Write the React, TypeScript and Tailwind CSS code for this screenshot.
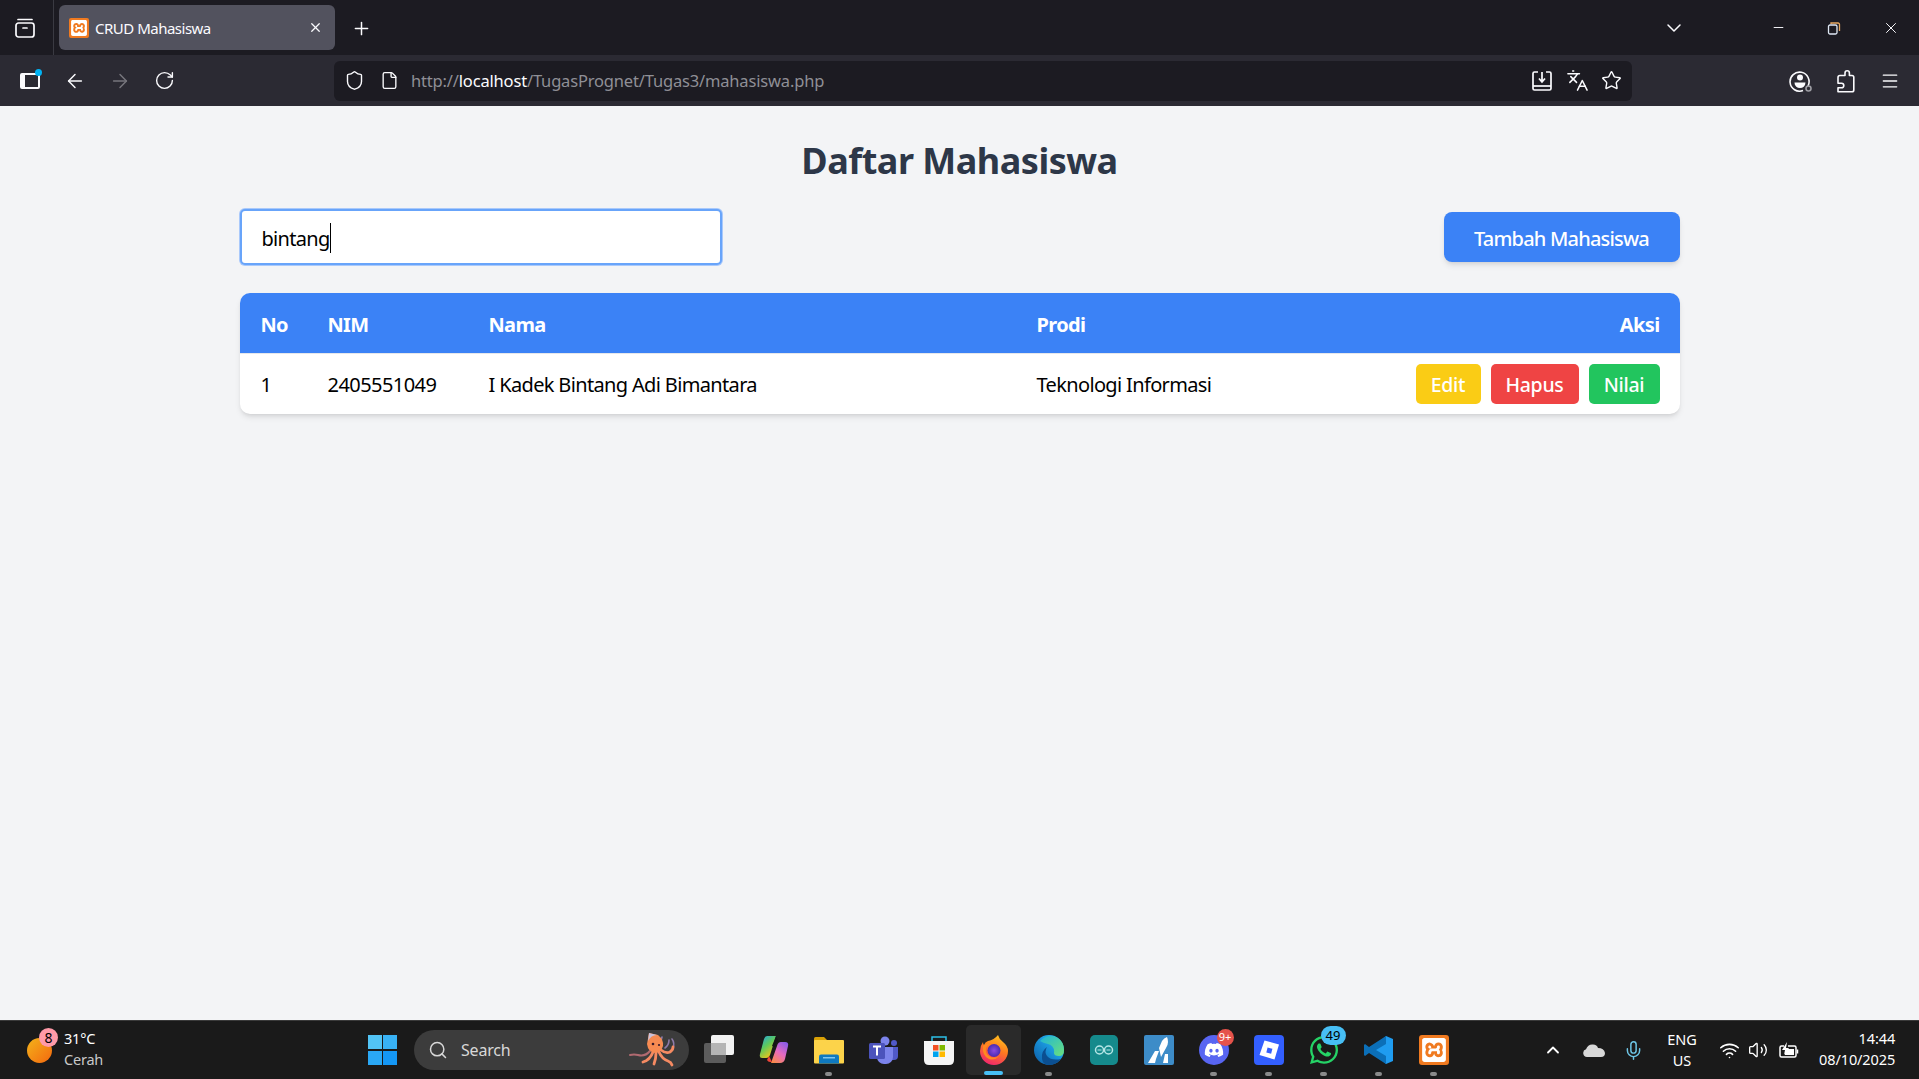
import React from 'react';
import {
  ArrowLeft, ArrowRight, RotateCw, Shield, File, Star, Menu, X, Plus, ChevronDown, ChevronUp,
  Minus, Languages, Search, Mic, Wifi, Volume2,
} from 'lucide-react';
import { FaDiscord, FaWhatsapp } from 'react-icons/fa';
import { SiXampp } from 'react-icons/si';

const uiFont = { fontFamily: '"Noto Sans", "Open Sans", sans-serif' };

const BrowserTabBar = () => (
  <div className="flex h-[55px] items-center bg-[#1c1b22] text-[#fbfbfe]">
    <div className="flex h-full w-[54px] items-center justify-center border-r border-[#3a3a42] pr-[3px]">
      <svg width="22" height="22" viewBox="0 0 22 22" fill="none" stroke="currentColor" strokeWidth="1.7">
        <rect x="2" y="6" width="18" height="14" rx="2.5" />
        <path d="M4 2.5h14" strokeLinecap="round" />
        <path d="M9 11h4" strokeLinecap="round" />
      </svg>
    </div>
    <div className="ml-[5px] flex h-[45px] w-[276px] items-center rounded-[6px] bg-[#52525e] pl-[10px] pr-[12px]">
      <div className="flex h-[20px] w-[20px] items-center justify-center rounded-[2px] bg-[#f07a20]">
        <SiXampp size={16} color="#fff" />
      </div>
      <span className="ml-[6px] flex-1 pt-[1px] text-[15px] tracking-[-0.5px]">CRUD Mahasiswa</span>
      <X size={15} strokeWidth={2} />
    </div>
    <Plus size={21} strokeWidth={1.7} className="ml-[16px] mt-[1px]" />
    <div className="flex-1" />
    <ChevronDown size={24} strokeWidth={1.5} className="mr-[85px]" />
    <Minus size={15} strokeWidth={1.5} className="mr-[41px]" />
    <svg width="14" height="14" viewBox="0 0 14 14" fill="none" strokeWidth="1.3" className="mr-[41px]">
      <path d="M4 3V2h7a1.5 1.5 0 0 1 1.5 1.5V10" stroke="#e8a860" />
      <rect x="1.5" y="4" width="8.5" height="9" rx="1.5" stroke="#dfe8f5" />
    </svg>
    <X size={18} strokeWidth={1.3} className="mr-[19px]" />
  </div>
);

const BrowserToolbar = () => (
  <div className="flex h-[51px] items-center bg-[#2b2a33] text-[#fbfbfe]">
    <div className="relative ml-[20px] flex w-[20px] justify-center">
      <div className="h-[16px] w-[20px] rounded-[2px] border-[2px] border-l-[5px] border-[#fbfbfe]" />
      <div className="absolute -right-[2px] -top-[4px] h-[7px] w-[7px] rounded-full bg-[#00b3f4]" />
    </div>
    <ArrowLeft size={22} strokeWidth={1.6} className="ml-[24px]" />
    <ArrowRight size={22} strokeWidth={1.6} className="ml-[23px] text-[#77767d]" />
    <RotateCw size={21} strokeWidth={1.6} className="ml-[23px]" />
    <div className="ml-[159px] flex h-[40px] w-[1298px] items-center rounded-[6px] bg-[#1c1b22] pl-[10px] pr-[10px]">
      <Shield size={21} strokeWidth={1.6} />
      <File size={19} strokeWidth={1.7} className="ml-[15px]" />
      <span className="ml-[12px] flex-1 pt-[2px] text-[16.5px] tracking-[-0.17px] text-[#8f8f96]">
        http://<span className="text-[#fbfbfe]">localhost</span>/TugasPrognet/Tugas3/mahasiswa.php
      </span>
      <svg width="22" height="22" viewBox="0 0 22 22" fill="none" stroke="currentColor" strokeWidth="1.7" className="mr-[13px]">
        <path d="M7 2H3.5A1.5 1.5 0 0 0 2 3.5v15A1.5 1.5 0 0 0 3.5 20h15a1.5 1.5 0 0 0 1.5-1.5v-15A1.5 1.5 0 0 0 18.5 2H15" />
        <path d="M2 16h18" />
        <path d="M11 2v9M8 8.500l3 3.500 3-3.500" />
      </svg>
      <Languages size={23} strokeWidth={1.6} className="mr-[12px]" />
      <Star size={21} strokeWidth={1.6} />
    </div>
    <div className="relative ml-[157px]">
      <svg width="23" height="23" viewBox="0 0 23 23" fill="none" stroke="currentColor" strokeWidth="1.6">
        <path d="M19 17a9.500 9.500 0 1 0-5 4.500" />
        <circle cx="11" cy="8.500" r="3" fill="currentColor" stroke="none" />
        <path d="M5.500 13.500h11a5.500 5.500 0 0 1-11 0z" fill="currentColor" stroke="none" />
        <circle cx="19.500" cy="19.500" r="2.500" stroke="#9d9da3" />
      </svg>
    </div>
    <svg width="20" height="24" viewBox="0 0 20 24" fill="none" stroke="currentColor" strokeWidth="1.6" strokeLinejoin="round" className="ml-[23px]">
      <path d="M10 6.500V4a2.200 2.200 0 0 1 4.400 0v2.500h2.600q1.800 0 1.800 1.800V21q0 1.800-1.800 1.800H3v-4h3.500a2.300 2.300 0 0 0 0-4.600H3V8.500q0-2 2-2z" />
    </svg>
    <Menu size={20} strokeWidth={1.6} className="ml-[25px]" />
  </div>
);

const ActionButton = ({ label, color }: { label: string; color: string }) => (
  <button className={`h-[40px] rounded-[5px] pt-[2px] text-[19.5px] font-medium text-white ${color}`}>{label}</button>
);

const StudentPage = () => (
  <main className="flex-1 bg-[#f3f4f6]">
    <div className="mx-auto w-[1440px] pt-[30px]">
      <h1 className="text-center text-[36px] font-bold leading-[50px] tracking-[-0.5px] text-[#2d3748]">
        Daftar Mahasiswa
      </h1>
      <div className="mt-[23px] flex items-center justify-between">
        <div className="flex h-[56px] w-[482px] items-center rounded-[5px] border-[2.5px] border-[#68a4fa] bg-white pl-[20px] pt-[4px] text-[20px] tracking-[-0.7px] text-black ring-1 ring-[#a9c9fb]">
          bintang
          <span className="mb-[3px] h-[30px] w-px bg-black" />
        </div>
        <button className="h-[50px] w-[236px] rounded-[8px] bg-[#3b82f6] pt-[3px] text-[20px] font-medium tracking-[-0.8px] text-white shadow-md">
          Tambah Mahasiswa
        </button>
      </div>
      <div className="mt-[28px] overflow-hidden rounded-[10px] bg-white shadow-md">
        <table className="w-full text-left text-[20px] tracking-[-0.65px] text-black">
          <thead className="bg-[#3b82f6] text-white">
            <tr className="h-[60px]">
              <th className="w-[88px] pl-[21px] pt-[4px] font-bold">No</th>
              <th className="w-[161px] pt-[4px] font-bold">NIM</th>
              <th className="w-[548px] pt-[4px] font-bold">Nama</th>
              <th className="pt-[4px] font-bold">Prodi</th>
              <th className="pr-[20px] pt-[4px] text-right font-bold">Aksi</th>
            </tr>
          </thead>
          <tbody>
            <tr className="h-[61px] border-t border-[#e5e7eb]">
              <td className="pl-[21px] pt-[2px]">1</td>
              <td className="pt-[2px] tracking-[-0.55px]">2405551049</td>
              <td className="pt-[2px]">I Kadek Bintang Adi Bimantara</td>
              <td className="pt-[2px]">Teknologi Informasi</td>
              <td className="pr-[20px]">
                <div className="flex justify-end gap-[10px] tracking-[-0.3px]">
                  <ActionButton label="Edit" color="w-[65px] bg-[#facc15]" />
                  <ActionButton label="Hapus" color="w-[88px] bg-[#ef4444]" />
                  <ActionButton label="Nilai" color="w-[71px] bg-[#22c55e]" />
                </div>
              </td>
            </tr>
          </tbody>
        </table>
      </div>
    </div>
  </main>
);

const TaskView = () => (
  <svg width="32" height="32" viewBox="0 0 32 32">
    <rect x="1" y="9" width="22" height="20" rx="2" fill="#5c5c5c" />
    <rect x="8" y="1" width="23" height="20" rx="2" fill="#f2f2f2" />
    <rect x="8" y="9" width="15" height="12" fill="#b5b5b5" />
  </svg>
);

const Copilot = () => (
  <svg width="30" height="30" viewBox="0 0 30 30">
    <defs>
      <linearGradient id="cp1" x1="0" y1="0" x2="0.6" y2="1">
        <stop offset="0" stopColor="#1fa4ea" />
        <stop offset="0.5" stopColor="#5fc95a" />
        <stop offset="1" stopColor="#f5c518" />
      </linearGradient>
      <linearGradient id="cp2" x1="0.8" y1="0" x2="0.2" y2="1">
        <stop offset="0" stopColor="#8a5ce8" />
        <stop offset="0.5" stopColor="#e66ac0" />
        <stop offset="1" stopColor="#f98a4b" />
      </linearGradient>
    </defs>
    <path d="M8 1h9l-6 19q-1 3-4 3H3Q0 23 1 19L5 4q1-3 3-3z" fill="url(#cp1)" />
    <path d="M22 7h4q4 0 3 4l-3 13q-1 4-5 4H12l6-17q1-4 4-4z" fill="url(#cp2)" />
    <path d="M17 1l3 6h-2l-2 5-3-1z" fill="#141414" />
    <path d="M10 21l3 6h-2q-2 0-3-2z" fill="#f0453a" />
  </svg>
);

const FolderIcon = () => (
  <svg width="30" height="28" viewBox="0 0 30 28">
    <path d="M0 2.500Q0 1 1.500 1H10l3 3v3H0z" fill="#d9a106" />
    <rect x="0" y="4" width="30" height="23.500" rx="1" fill="#fcd34a" />
    <path d="M5 27.500v-7q0-2 2-2h16q2 0 2 2v7z" fill="#0f79bf" />
    <rect x="9" y="21" width="12" height="1.500" fill="#7cc5f0" />
  </svg>
);

const Teams = () => (
  <svg width="30" height="28" viewBox="0 0 30 28">
    <circle cx="16" cy="5" r="4.500" fill="#7b83eb" />
    <circle cx="25" cy="7" r="3" fill="#5059c9" />
    <path d="M20 11h9v9q0 4-4 4h-5z" fill="#5059c9" />
    <path d="M8 11h16v10a7 7 0 0 1-7 7h-2a7 7 0 0 1-7-7z" fill="#7b83eb" />
    <rect x="0" y="7" width="16" height="16" rx="1.500" fill="#4b53bc" />
    <path d="M4 10.500h8M8 10.500v9" stroke="#fff" strokeWidth="2" fill="none" />
  </svg>
);

const StoreBag = () => (
  <svg width="30" height="30" viewBox="0 0 30 30">
    <path d="M8 6V2h14v4" fill="none" stroke="#2cc0e8" strokeWidth="1.500" />
    <path d="M0 6h30v19q0 5-5 5H5q-5 0-5-5z" fill="#f5f5f5" />
    <rect x="9" y="10" width="5.500" height="5.500" fill="#f25022" />
    <rect x="15.500" y="10" width="5.500" height="5.500" fill="#7fba00" />
    <rect x="9" y="16.500" width="5.500" height="5.500" fill="#00a4ef" />
    <rect x="15.500" y="16.500" width="5.500" height="5.500" fill="#ffb900" />
  </svg>
);

const Firefox = () => (
  <svg width="30" height="30" viewBox="0 0 30 30">
    <defs>
      <linearGradient id="ff1" x1="0.7" y1="0" x2="0.3" y2="1">
        <stop offset="0" stopColor="#ffc21f" />
        <stop offset="0.45" stopColor="#ff7a1f" />
        <stop offset="1" stopColor="#f0246f" />
      </linearGradient>
      <radialGradient id="ff2">
        <stop offset="0" stopColor="#8a4be0" />
        <stop offset="1" stopColor="#4a2bb0" />
      </radialGradient>
    </defs>
    <path d="M19 0q1 4 5 7 5 4 5 9a14 14 0 0 1-28 0q0-5 3-9 0 2 1 3 1-3 4-4 6-1 10-6z" fill="url(#ff1)" />
    <circle cx="15" cy="15.500" r="6.500" fill="url(#ff2)" />
    <path d="M4 11q3-3 7-2-3 1-4 4-1 5 3 8 5 3 10 0-4 5-10 3-7-3-6-13z" fill="#ff8a20" />
  </svg>
);

const Edge = () => (
  <svg width="30" height="30" viewBox="0 0 30 30">
    <defs>
      <linearGradient id="ed1" x1="0" y1="1" x2="1" y2="0">
        <stop offset="0" stopColor="#0c59a4" />
        <stop offset="0.6" stopColor="#1b9de2" />
        <stop offset="1" stopColor="#35c1f1" />
      </linearGradient>
      <linearGradient id="ed2" x1="0" y1="0" x2="1" y2="1">
        <stop offset="0" stopColor="#1fb5d8" />
        <stop offset="1" stopColor="#6ce07a" />
      </linearGradient>
    </defs>
    <circle cx="15" cy="15" r="15" fill="url(#ed1)" />
    <path d="M6 6q8-8 18-3 6 4 6 12 0 6-5 6-5 0-5-3 1-7-6-9-5-1-8-3z" fill="url(#ed2)" />
    <path d="M27 24q-5 6-12 6-6 0-7-6-1-8 5-12-3 5 0 9 4 5 14 3z" fill="#0b4f91" />
  </svg>
);

const Arduino = () => (
  <svg width="28" height="30" viewBox="0 0 28 30">
    <rect width="28" height="30" rx="5" fill="#158a8c" />
    <circle cx="9.500" cy="15" r="4" fill="none" stroke="#b5e6e6" strokeWidth="1.500" />
    <circle cx="18.500" cy="15" r="4" fill="none" stroke="#b5e6e6" strokeWidth="1.500" />
    <path d="M7.500 15h4M16.500 15h4" stroke="#b5e6e6" strokeWidth="1" />
  </svg>
);

const BlueA = () => (
  <svg width="30" height="30" viewBox="0 0 30 30">
    <rect width="30" height="30" rx="2" fill="#3d8cc8" />
    <path d="M17 22l5-9q2-3 2-6 0-3-1-5-3 1-5 4l-3 7z" fill="#fff" />
    <path d="M4 28l7-12h4l-3 8-1 4z" fill="#fff" />
    <path d="M19 28l2-9h3v9z" fill="#fff" />
  </svg>
);

const Roblox = () => (
  <svg width="30" height="30" viewBox="0 0 30 30">
    <rect width="30" height="30" rx="4" fill="#335fff" />
    <path d="M10.500 5.500L25 9.500 20.500 24.500 5.500 20z" fill="#fff" />
    <rect x="13" y="13" width="5" height="5" fill="#335fff" transform="rotate(15 15 15)" />
  </svg>
);

const VsCode = () => (
  <svg width="30" height="30" viewBox="0 0 30 30">
    <path d="M22 1l7 3v22l-7 3L8 16z" fill="#1f9cf0" />
    <path d="M22 1v8L12 15 22 21v8L5 18l-4 3-1-1v-10l1-1 4 3z" fill="#0b6fb8" />
  </svg>
);

const Xampp = () => (
  <div className="flex h-[30px] w-[30px] items-center justify-center rounded-[3px] bg-[#f07a20]">
    <SiXampp size={24} color="#fff" />
  </div>
);

const Octopus = () => (
  <svg width="48" height="36" viewBox="0 0 48 36" fill="none" strokeLinecap="round">
    <path d="M30 15q3-4 4-10M37 16q4-3 4-8M44 7q3 4 1 10" stroke="#8d7aa8" strokeWidth="1.600" />
    <path d="M22 19q-5 6-12 4-4-1-8 0" stroke="#b06a70" strokeWidth="2" />
    <path d="M25 20q-3 8-10 10M28 21q0 6-2 11M31 20q3 7 9 9 3 1 4 4M33 18q5 4 9 2 3-2 3-5" stroke="#f58a62" strokeWidth="2.800" />
    <path d="M21 1l9 2q6 5 5 11-2 7-8 7-7-1-8-9z" fill="#f78b52" />
    <path d="M21 1l8 2q-6 0-9 6z" fill="#cbc2da" />
    <circle cx="25" cy="12" r="1.300" fill="#3a1a2a" />
    <circle cx="31" cy="13" r="1.100" fill="#3a1a2a" />
  </svg>
);

const Count = ({ text, className }: { text: string; className: string }) => (
  <span className={`absolute flex items-center justify-center rounded-full ${className}`}>{text}</span>
);

// one taskbar slot, 55px wide
const Slot = ({ children, dot, active }: { children: React.ReactNode; dot?: boolean; active?: boolean }) => (
  <div className={`relative flex h-[50px] w-[55px] items-center justify-center ${active ? 'rounded-[5px] bg-[#2a2a2a]' : ''}`}>
    <div className="relative flex items-center justify-center">{children}</div>
    {dot && <span className="absolute bottom-[-1px] h-[4px] w-[7px] rounded-full bg-[#8a8a8a]" />}
    {active && <span className="absolute bottom-[0px] h-[4px] w-[19px] rounded-full bg-[#47bff5]" />}
  </div>
);

const Taskbar = () => (
  <footer className="flex h-[59px] items-center border-t border-[#3a3a3a] bg-[#1a1a1a] text-white">
    <div className="flex w-[355px] shrink-0 items-center pl-[27px]">
      <div className="relative h-[25px] w-[25px] rounded-full bg-gradient-to-br from-[#f2b21a] to-[#f2660f]">
        <Count text="8" className="-right-[6px] -top-[10px] h-[19px] w-[19px] bg-[#ff9aa8] text-[14px] text-black" />
      </div>
      <div className="ml-[12px] pb-[2px] text-[14.5px] leading-[21px] tracking-[-0.2px]">
        <div>31°C</div>
        <div className="text-[#c8c8c8]">Cerah</div>
      </div>
    </div>
    <Slot>
      <div className="grid grid-cols-2 gap-[1.500px]">
        <span className="h-[14px] w-[14px] bg-[#52c4f5]" />
        <span className="h-[14px] w-[14px] bg-[#38b2f5]" />
        <span className="h-[14px] w-[14px] bg-[#2aa8f5]" />
        <span className="h-[14px] w-[14px] bg-[#1497f5]" />
      </div>
    </Slot>
    <div className="relative ml-[4px] mr-[2px] flex h-[40px] w-[275px] items-center rounded-full bg-[#3c3c3c] pl-[14px] text-[#d8d8d8]">
      <Search size={20} strokeWidth={1.8} />
      <span className="ml-[13px] text-[16px] tracking-[-0.2px]">Search</span>
      <div className="absolute right-[13px] top-[2px]">
        <Octopus />
      </div>
    </div>
    <Slot><TaskView /></Slot>
    <Slot><Copilot /></Slot>
    <Slot dot><FolderIcon /></Slot>
    <Slot><Teams /></Slot>
    <Slot><StoreBag /></Slot>
    <Slot active><Firefox /></Slot>
    <Slot dot><Edge /></Slot>
    <Slot><Arduino /></Slot>
    <Slot><BlueA /></Slot>
    <Slot dot>
      <div className="flex h-[30px] w-[30px] items-center justify-center rounded-full bg-[#5865f2]">
        <FaDiscord size={20} color="#fff" />
      </div>
      <Count text="9+" className="-right-[5px] -top-[6px] h-[17px] w-[17px] bg-[#e5534b] text-[11px] text-white" />
    </Slot>
    <Slot dot><Roblox /></Slot>
    <Slot dot>
      <FaWhatsapp size={32} color="#25d366" />
      <Count text="49" className="-right-[6px] -top-[8px] h-[19px] w-[25px] bg-[#47bff5] text-[13px] text-black" />
    </Slot>
    <Slot dot><VsCode /></Slot>
    <Slot dot><Xampp /></Slot>
    <div className="ml-[82px] flex items-center">
      <ChevronUp size={20} strokeWidth={2.2} />
      <svg width="22" height="14" viewBox="0 0 22 14" className="ml-[20px]">
        <path d="M4 14a4 4 0 0 1-1-7.800Q5 1 10 1.500q4 0 5 3.500 6 0 7 5 0 4-4 4z" fill="#d8d8d8" />
      </svg>
      <Mic size={21} strokeWidth={1.7} color="#6ec6e6" className="ml-[18px]" />
      <div className="ml-[13px] w-[50px] text-center text-[14.500px] leading-[21px]">
        <div>ENG</div>
        <div>US</div>
      </div>
      <Wifi size={21} strokeWidth={1.8} className="ml-[12px]" />
      <Volume2 size={20} strokeWidth={1.6} className="ml-[8px]" />
      <svg width="20" height="16" viewBox="0 0 20 16" fill="none" stroke="currentColor" strokeWidth="1.500" className="ml-[11px]">
        <path d="M5 4H2.500A1.500 1.500 0 0 0 1 5.500v8A1.500 1.500 0 0 0 2.500 15h13a1.500 1.500 0 0 0 1.500-1.500v-8A1.500 1.500 0 0 0 15.500 4H9" />
        <path d="M18.500 7.500v4" />
        <path d="M8 0L3 8h3l-1 5 5-7H7z" fill="currentColor" stroke="none" />
        <rect x="6" y="7" width="9" height="6" fill="currentColor" stroke="none" />
      </svg>
      <div className="ml-[20px] pb-[2px] text-right text-[14.500px] leading-[21px] tracking-[-0.1px]">
        <div>14:44</div>
        <div>08/10/2025</div>
      </div>
    </div>
  </footer>
);

export default function App() {
  return (
    <div className="flex h-[1079px] flex-col overflow-hidden" style={uiFont}>
      <BrowserTabBar />
      <BrowserToolbar />
      <StudentPage />
      <Taskbar />
    </div>
  );
}
